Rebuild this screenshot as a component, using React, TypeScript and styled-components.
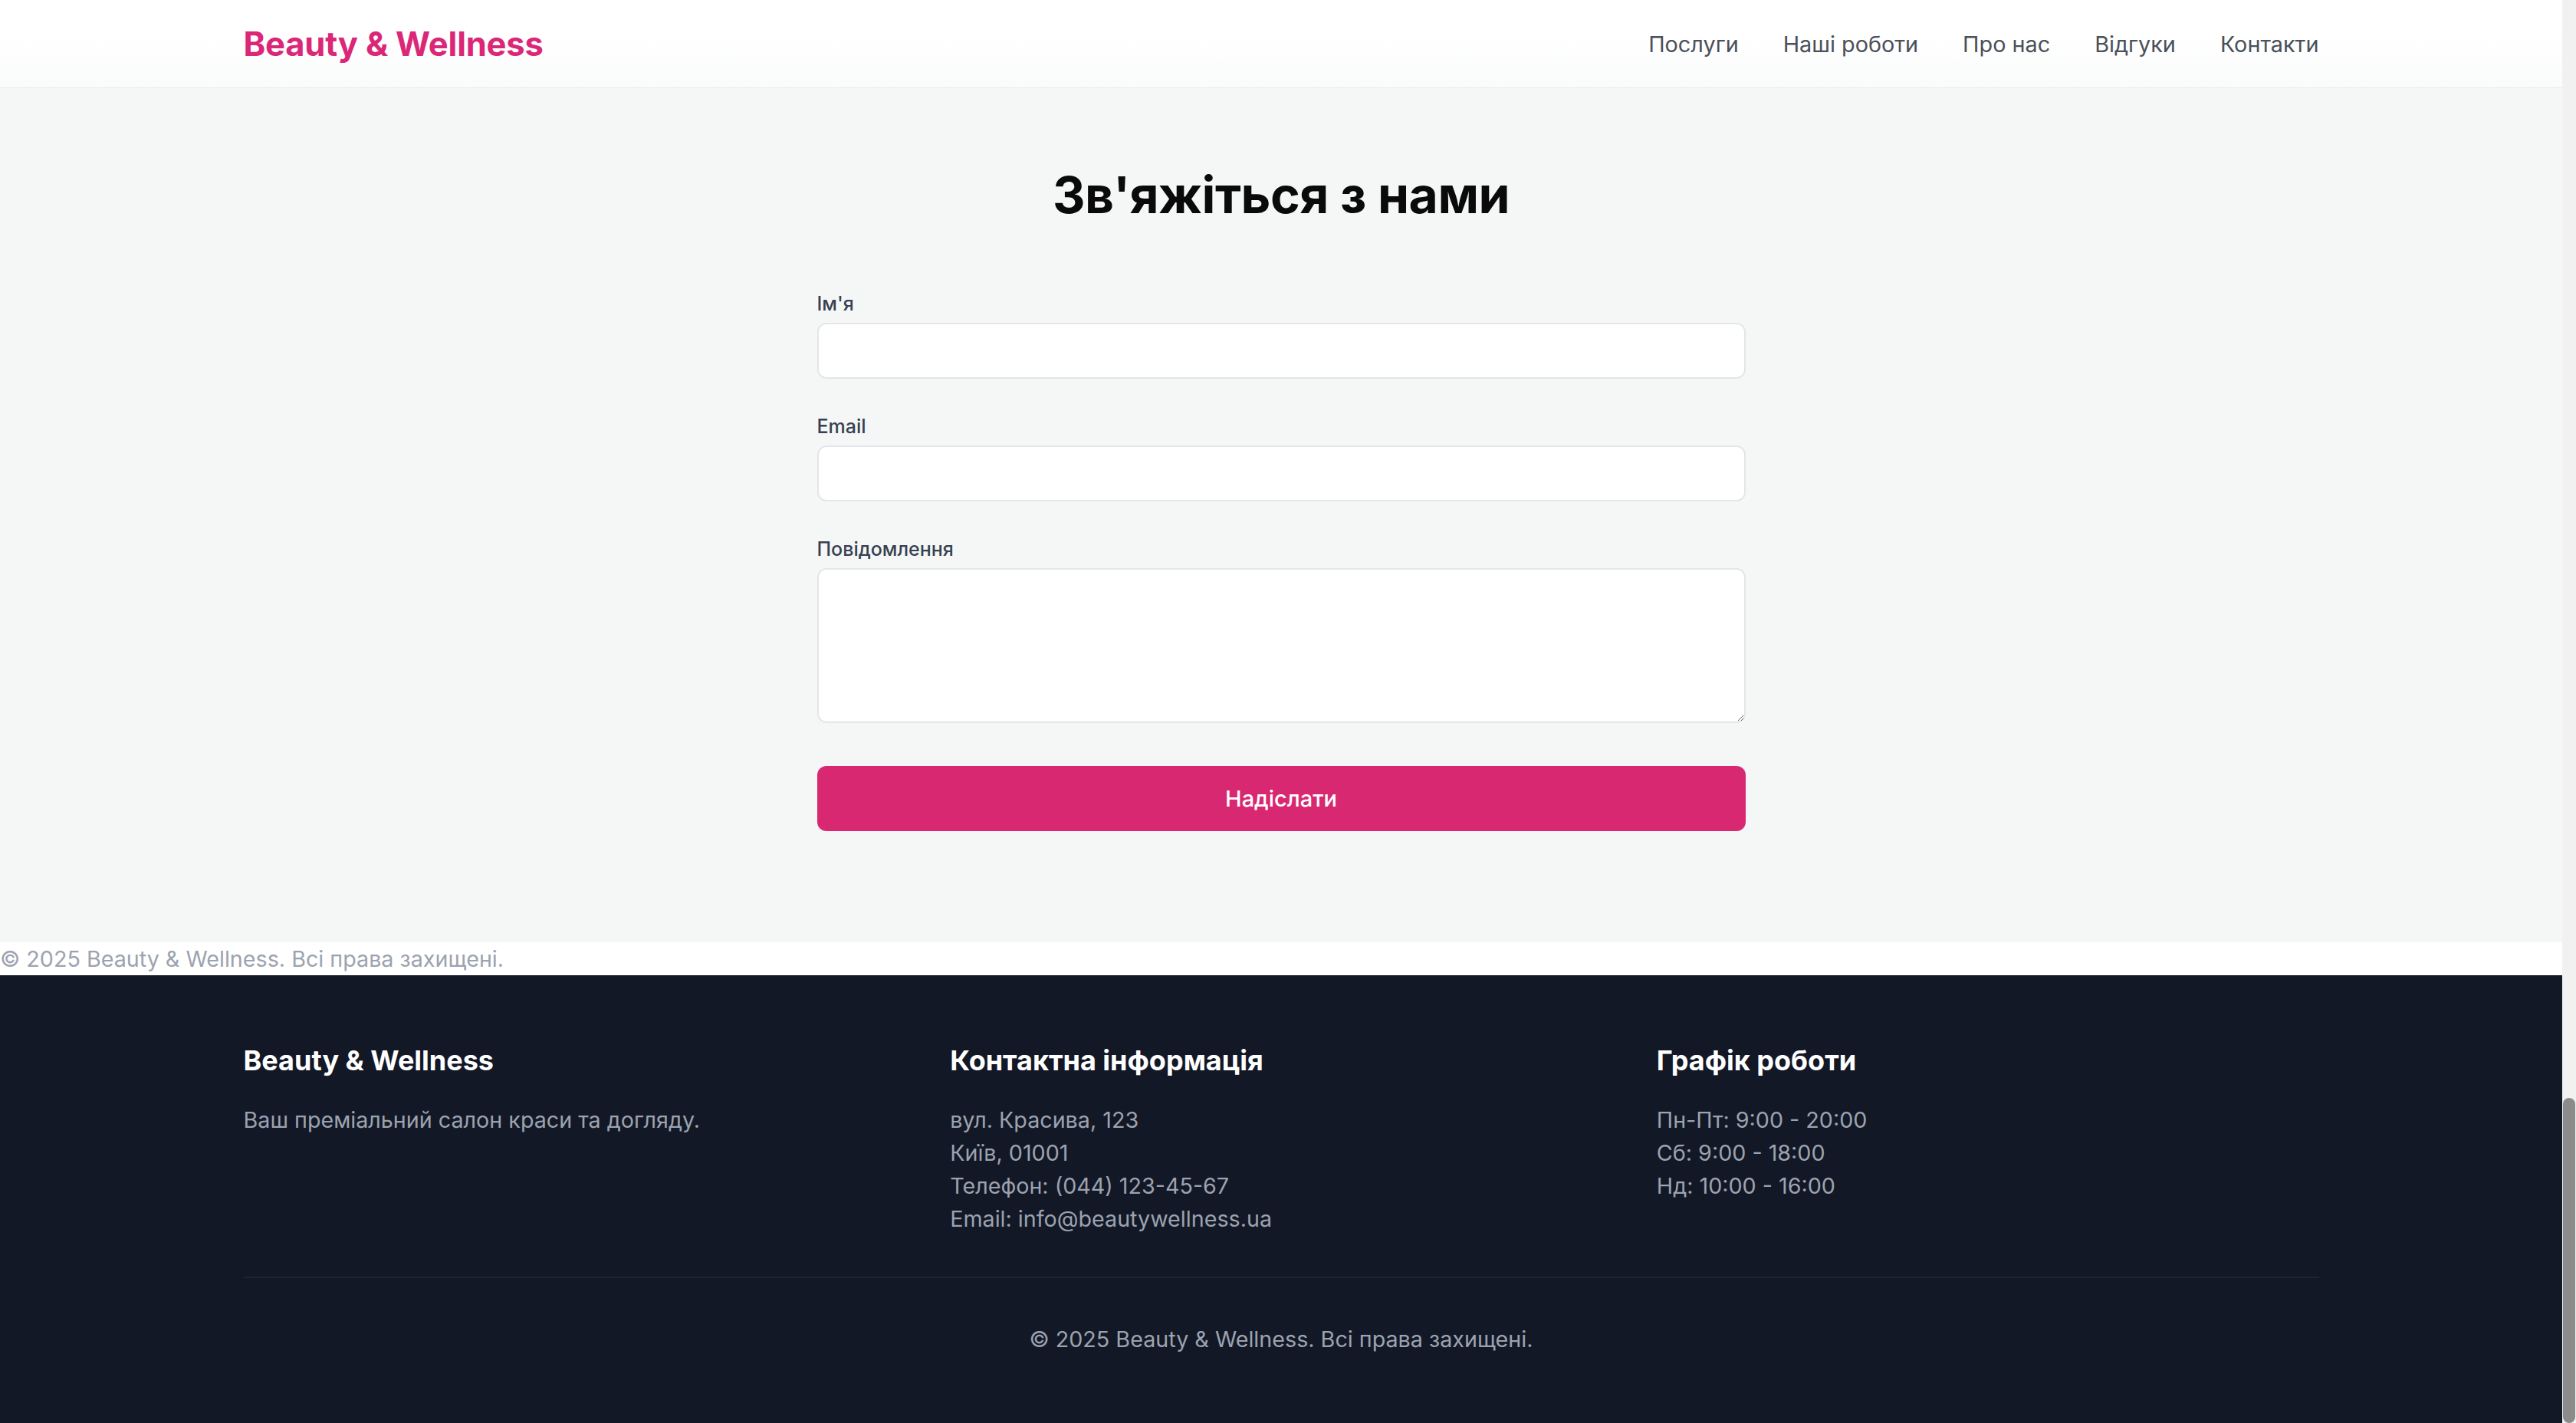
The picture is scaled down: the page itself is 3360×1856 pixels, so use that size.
import React from "react";
import styled, { createGlobalStyle } from "styled-components";

const GlobalStyle = createGlobalStyle`
  html, body {
    margin: 0;
    padding: 0;
    overflow: hidden;
    font-family: Inter, "Noto Sans", "Liberation Sans", sans-serif;
    -webkit-font-smoothing: antialiased;
  }
  * {
    box-sizing: border-box;
  }
`;

const navItems = ["Послуги", "Наші роботи", "Про нас", "Відгуки", "Контакти"];

const contactLines = [
  "вул. Красива, 123",
  "Київ, 01001",
  "Телефон: (044) 123-45-67",
  "Email: info@beautywellness.ua",
];

const hoursLines = ["Пн-Пт: 9:00 - 20:00", "Сб: 9:00 - 18:00", "Нд: 10:00 - 16:00"];

const App = () => {
  return (
    <Window>
      <GlobalStyle />
      <Page>
        <Header>
          <Container>
            <Logo>Beauty &amp; Wellness</Logo>
            <Nav>
              {navItems.map((item) => (
                <NavLink key={item} href="#">
                  {item}
                </NavLink>
              ))}
            </Nav>
          </Container>
        </Header>

        <ContactSection>
          <Title>Зв'яжіться з нами</Title>
          <Form onSubmit={(e) => e.preventDefault()}>
            <Field>
              <Label htmlFor="name">Ім'я</Label>
              <Input id="name" type="text" />
            </Field>
            <Field>
              <Label htmlFor="email">Email</Label>
              <Input id="email" type="email" />
            </Field>
            <Field>
              <Label htmlFor="message">Повідомлення</Label>
              <TextArea id="message" />
            </Field>
            <SubmitButton type="submit">Надіслати</SubmitButton>
          </Form>
        </ContactSection>

        <StrayCopyright>© 2025 Beauty &amp; Wellness. Всі права захищені.</StrayCopyright>

        <Footer>
          <FooterContainer>
            <FooterGrid>
              <FooterColumn>
                <FooterHeading>Beauty &amp; Wellness</FooterHeading>
                <FooterText>Ваш преміальний салон краси та догляду.</FooterText>
              </FooterColumn>
              <FooterColumn>
                <FooterHeading>Контактна інформація</FooterHeading>
                {contactLines.map((line) => (
                  <FooterText key={line}>{line}</FooterText>
                ))}
              </FooterColumn>
              <FooterColumn>
                <FooterHeading>Графік роботи</FooterHeading>
                {hoursLines.map((line) => (
                  <FooterText key={line}>{line}</FooterText>
                ))}
              </FooterColumn>
            </FooterGrid>
            <FooterBottom>© 2025 Beauty &amp; Wellness. Всі права захищені.</FooterBottom>
          </FooterContainer>
        </Footer>
      </Page>

      <ScrollTrack>
        <ScrollThumb />
      </ScrollTrack>
    </Window>
  );
};

const Window = styled.div`
  display: flex;
  width: 3360px;
  height: 1856px;
  overflow: hidden;
`;

const Page = styled.div`
  flex: 1;
  display: flex;
  flex-direction: column;
  background: #f5f7f7;
`;

const Header = styled.header`
  height: 115px;
  background: linear-gradient(#ffffff 40%, #fafbfb);
  border-bottom: 1px solid #e8eaec;
  display: flex;
  align-items: center;
`;

const Container = styled.div`
  width: 2707px;
  margin: 0 auto;
  display: flex;
  align-items: center;
  justify-content: space-between;
`;

const Logo = styled.div`
  font-size: 43.5px;
  font-weight: 700;
  color: #db2777;
  letter-spacing: -0.2px;
`;

const Nav = styled.nav`
  display: flex;
  gap: 58px;
`;

const NavLink = styled.a`
  font-size: 28.8px;
  color: #4b5059;
  text-decoration: none;
`;

const ContactSection = styled.section`
  height: 1114px;
  padding-top: 101px;
  display: flex;
  flex-direction: column;
  align-items: center;
`;

const Title = styled.h2`
  margin: 0 0 80px;
  font-size: 66px;
  line-height: 77px;
  font-weight: 700;
  color: #0a0a0a;
  letter-spacing: -0.5px;
`;

const Form = styled.form`
  width: 1211px;
  display: flex;
  flex-direction: column;
`;

const Field = styled.div`
  display: flex;
  flex-direction: column;
  margin-bottom: 39px;
`;

const Label = styled.label`
  font-size: 25px;
  line-height: 42px;
  font-weight: 500;
  color: #374151;
  margin-top: 2px;
  margin-bottom: 4px;
`;

const Input = styled.input`
  height: 73px;
  border: 2px solid #e3e6ea;
  border-radius: 12px;
  background: #ffffff;
  font-family: inherit;
  font-size: 30px;
  padding: 0 20px;
  outline: none;
`;

const TextArea = styled.textarea`
  height: 202px;
  border: 2px solid #e3e6ea;
  border-radius: 12px;
  background: #ffffff;
  font-family: inherit;
  font-size: 30px;
  padding: 16px 20px;
  outline: none;
  resize: vertical;
`;

const SubmitButton = styled.button`
  margin-top: 17px;
  height: 85px;
  border: none;
  border-radius: 12px;
  background: #d92872;
  color: #ffffff;
  font-family: inherit;
  font-size: 29px;
  font-weight: 500;
  cursor: pointer;
`;

const StrayCopyright = styled.p`
  margin: 0;
  height: 43px;
  background: #ffffff;
  font-size: 28.7px;
  line-height: 43px;
  color: #9ca3af;
`;

const Footer = styled.footer`
  flex: 1;
  background: #131827;
  padding: 85px 0 0;
`;

const FooterContainer = styled.div`
  width: 2707px;
  margin: 0 auto;
`;

const FooterGrid = styled.div`
  display: grid;
  grid-template-columns: repeat(3, 1fr);
  column-gap: 58px;
`;

const FooterColumn = styled.div`
  display: flex;
  flex-direction: column;
`;

const FooterHeading = styled.h3`
  margin: 0 0 30px;
  font-size: 36px;
  line-height: 52px;
  font-weight: 700;
  color: #ffffff;
`;

const FooterText = styled.p`
  margin: 0;
  font-size: 28.7px;
  line-height: 43px;
  color: #9ca3af;
`;

const FooterBottom = styled.p`
  margin: 54px 0 0;
  padding-top: 58px;
  border-top: 2px solid #1e2433;
  text-align: center;
  font-size: 28.7px;
  line-height: 43px;
  color: #9ca3af;
`;

const ScrollTrack = styled.div`
  width: 18px;
  background: #f1f1f1;
  display: flex;
  flex-direction: column;
  justify-content: flex-end;
`;

const ScrollThumb = styled.div`
  height: 424px;
  margin: 0 1px;
  border-radius: 9px;
  background: #8b8b8b;
`;

export default App;
